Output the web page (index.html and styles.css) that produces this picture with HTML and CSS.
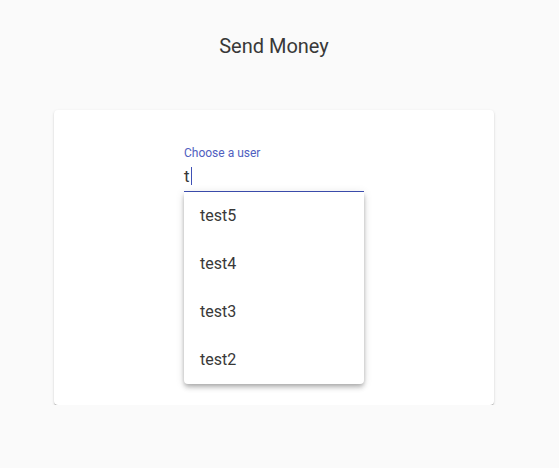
FILE: index.html
```html
<!DOCTYPE html>
<html>
<head>
<meta charset="utf-8">
<link rel="stylesheet" href="styles.css">
</head>
<body>
<div class="page">
  <h2 class="title">Send Money</h2>
  <div class="card">
    <div class="field">
      <label class="label">Choose a user</label>
      <div class="input"><span class="value">t</span><span class="caret"></span></div>
      <div class="underline"></div>
      <div class="panel">
        <div class="option">test5</div>
        <div class="option">test4</div>
        <div class="option">test3</div>
        <div class="option">test2</div>
      </div>
    </div>
  </div>
</div>
</body>
</html>
```
FILE: styles.css
```css
html, body {
  margin: 0;
  padding: 0;
  background: #fafafa;
  font-family: Roboto, "Liberation Sans", sans-serif;
  color: #383838;
}
.page {
  width: 440px;
  margin-left: 54px;
  padding-top: 30px;
}
.title {
  margin: 0;
  font-size: 20px;
  font-weight: 400;
  line-height: 32px;
  text-align: center;
}
.card {
  margin-top: 48px;
  height: 295px;
  box-sizing: border-box;
  background: #fff;
  border-radius: 4px;
  box-shadow: 0 2px 1px -1px rgba(0,0,0,.25), 0 1px 1px 0 rgba(0,0,0,.16), 0 1px 3px 0 rgba(0,0,0,.12);
  padding-top: 36px;
  display: flex;
  justify-content: center;
}
.field {
  position: relative;
  width: 180px;
  height: 46px;
}
.label {
  display: block;
  font-size: 12px;
  line-height: 14px;
  color: #5060c0;
}
.input {
  display: flex;
  align-items: center;
  height: 22px;
  margin-top: 5px;
  font-size: 17px;
  line-height: 22px;
}
.caret {
  display: inline-block;
  width: 1px;
  height: 18px;
  background: #3f51b5;
  margin-left: 1px;
}
.underline {
  height: 1px;
  margin-top: 4px;
  background: #3f51b5;
}
.panel {
  position: absolute;
  left: 0;
  top: 46px;
  width: 180px;
  background: #fff;
  border-radius: 0 0 4px 4px;
  box-shadow: 0 2px 4px -1px rgba(0,0,0,.2), 0 4px 5px 0 rgba(0,0,0,.14), 0 1px 10px 0 rgba(0,0,0,.12);
}
.option {
  height: 48px;
  line-height: 48px;
  padding: 0 16px;
  font-size: 16px;
}
```
